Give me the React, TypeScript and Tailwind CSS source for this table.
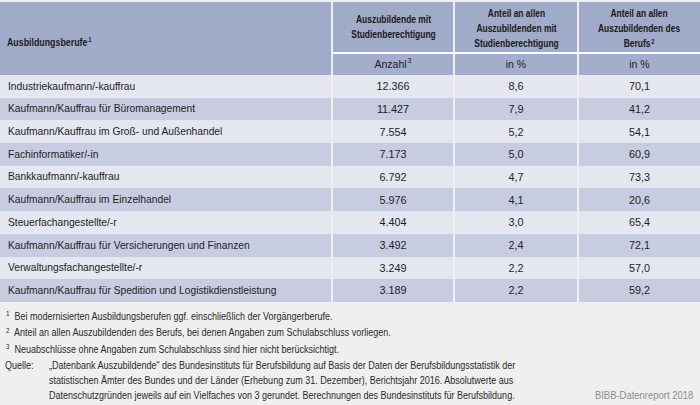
import React from "react";

const rows: [string, string, string, string][] = [
  ["Industriekaufmann/-kauffrau", "12.366", "8,6", "70,1"],
  ["Kaufmann/Kauffrau für Büromanagement", "11.427", "7,9", "41,2"],
  ["Kaufmann/Kauffrau im Groß- und Außenhandel", "7.554", "5,2", "54,1"],
  ["Fachinformatiker/-in", "7.173", "5,0", "60,9"],
  ["Bankkaufmann/-kauffrau", "6.792", "4,7", "73,3"],
  ["Kaufmann/Kauffrau im Einzelhandel", "5.976", "4,1", "20,6"],
  ["Steuerfachangestellte/-r", "4.404", "3,0", "65,4"],
  ["Kaufmann/Kauffrau für Versicherungen und Finanzen", "3.492", "2,4", "72,1"],
  ["Verwaltungsfachangestellte/-r", "3.249", "2,2", "57,0"],
  ["Kaufmann/Kauffrau für Spedition und Logistikdienstleistung", "3.189", "2,2", "59,2"],
];

const font = { fontFamily: '"Liberation Sans", Arial, sans-serif' };

const Sup = ({ n }: { n: string }) => (
  <span className="text-[7px] leading-[0] relative -top-[3.5px] ml-[1px]">{n}</span>
);

const Head = ({ children }: { children: React.ReactNode }) => (
  <span className="inline-block scale-x-[0.82] text-[10.3px] font-bold leading-[15px] whitespace-nowrap text-[#1a1a1a]">
    {children}
  </span>
);

const Line = ({ children }: { children: React.ReactNode }) => (
  <span className="inline-block origin-left scale-x-[0.9] whitespace-nowrap">{children}</span>
);

export default function App() {
  return (
    <div className="w-[700px] h-[405px] bg-[#efefef] text-[#1e1e1e] overflow-hidden pt-[2px]" style={font}>
      <div className="grid grid-cols-[331px_120px_122px_121px] gap-x-[2px] w-[698px]">
        <div className="row-span-2 bg-[#a0aac9] flex items-center pl-[7px] pt-[8px]">
          <span className="inline-block origin-left scale-x-[0.84] text-[10.5px] font-bold whitespace-nowrap">
            Ausbildungsberufe<Sup n="1" />
          </span>
        </div>
        <div className="h-[50px] bg-[#a0aac9] flex items-center justify-center text-center">
          <Head>Auszubildende mit<br />Studienberechtigung</Head>
        </div>
        <div className="h-[50px] bg-[#a0aac9] flex items-center justify-center text-center pt-[3px]">
          <Head>Anteil an allen<br />Auszubildenden mit<br />Studienberechtigung</Head>
        </div>
        <div className="h-[50px] bg-[#a0aac9] flex items-center justify-center text-center pt-[3px]">
          <Head>Anteil an allen<br />Auszubildenden des<br />Berufs<Sup n="2" /></Head>
        </div>
        <div className="col-span-3 grid grid-cols-[120px_122px_121px] gap-x-[2px] border-t-[2px] border-white">
          <div className="h-[21px] bg-[#a3adcc] flex items-center justify-center text-[10.5px]">
            Anzahl<Sup n="3" />
          </div>
          <div className="h-[21px] bg-[#a3adcc] flex items-center justify-center text-[10.5px]">in %</div>
          <div className="h-[21px] bg-[#a3adcc] flex items-center justify-center text-[10.5px]">in %</div>
        </div>
        {rows.map((r, i) => {
          const bg = i % 2 === 0 ? "bg-[#e4e6f0]" : "bg-[#c7cce0]";
          return (
            <React.Fragment key={i}>
              <div className={`${bg} h-[22.7px] flex items-center pl-[8px]`}>
                <span className="inline-block origin-left scale-x-[0.89] text-[11.5px] whitespace-nowrap">{r[0]}</span>
              </div>
              <div className={`${bg} h-[22.7px] flex items-center justify-center text-[10.8px]`}>{r[1]}</div>
              <div className={`${bg} h-[22.7px] flex items-center justify-center text-[10.8px]`}>{r[2]}</div>
              <div className={`${bg} h-[22.7px] flex items-center justify-center text-[10.8px]`}>{r[3]}</div>
            </React.Fragment>
          );
        })}
      </div>
      <div className="pl-[5px] pt-[7px] text-[10px] text-[#2a2a2a]">
        <div className="h-[16.5px] leading-[16.5px]"><Line><Sup n="1" />&nbsp; Bei modernisierten Ausbildungsberufen ggf. einschließlich der Vorgängerberufe.</Line></div>
        <div className="h-[16.5px] leading-[16.5px]"><Line><Sup n="2" />&nbsp; Anteil an allen Auszubildenden des Berufs, bei denen Angaben zum Schulabschluss vorliegen.</Line></div>
        <div className="h-[16.5px] leading-[16.5px]"><Line><Sup n="3" />&nbsp; Neuabschlüsse ohne Angaben zum Schulabschluss sind hier nicht berücksichtigt.</Line></div>
        <div className="flex leading-[15px]">
          <div className="w-[44px] shrink-0"><Line>Quelle:</Line></div>
          <div className="flex flex-col">
            <div className="h-[15px]"><Line>„Datenbank Auszubildende“ des Bundesinstituts für Berufsbildung auf Basis der Daten der Berufsbildungsstatistik der</Line></div>
            <div className="h-[15px]"><Line>statistischen Ämter des Bundes und der Länder (Erhebung zum 31. Dezember), Berichtsjahr 2016. Absolutwerte aus</Line></div>
            <div className="h-[15px]"><Line>Datenschutzgründen jeweils auf ein Vielfaches von 3 gerundet. Berechnungen des Bundesinstituts für Berufsbildung.</Line></div>
          </div>
          <div className="flex-1 flex items-end justify-end pr-[7px]">
            <span className="inline-block origin-right scale-x-[0.9] text-[10.5px] text-[#8a8a8a] whitespace-nowrap">BIBB-Datenreport 2018</span>
          </div>
        </div>
      </div>
    </div>
  );
}
